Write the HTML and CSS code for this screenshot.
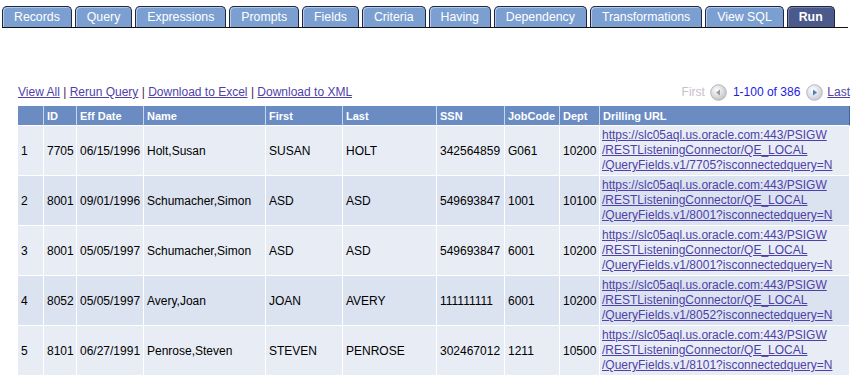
FILE: index.html
```html
<!DOCTYPE html>
<html lang="en">
<head>
  <meta charset="UTF-8" />
  <title>Query Manager - Run</title>
  <link rel="stylesheet" href="styles.css">
</head>
<body>

  <ul class="tabs">
    <li class="tab">Records</li>
    <li class="tab">Query</li>
    <li class="tab">Expressions</li>
    <li class="tab">Prompts</li>
    <li class="tab">Fields</li>
    <li class="tab">Criteria</li>
    <li class="tab">Having</li>
    <li class="tab">Dependency</li>
    <li class="tab">Transformations</li>
    <li class="tab">View SQL</li>
    <li class="tab active">Run</li>
  </ul>

  <div class="toolbar">
    <div class="actions">
      <a href="#">View All</a> <span class="sep">|</span>
      <a href="#">Rerun Query</a> <span class="sep">|</span>
      <a href="#">Download to Excel</a> <span class="sep">|</span>
      <a href="#">Download to XML</a>
    </div>
    <div class="pager">
      <span class="disabled">First</span>
      <svg class="nav-btn" width="17" height="17" viewBox="0 0 17 17">
        <defs>
          <radialGradient id="gPrev" cx="40%" cy="35%" r="65%">
            <stop offset="0" stop-color="#ffffff" />
            <stop offset="1" stop-color="#c4c4c8" />
          </radialGradient>
        </defs>
        <circle cx="8.5" cy="8.5" r="7.8" fill="url(#gPrev)" stroke="#b4b4ba" />
        <path d="M6 8.5 L10 5.5 L10 11.5 Z" fill="#9a9aa0" />
      </svg>
      <span class="count">1-100 of 386</span>
      <svg class="nav-btn" width="17" height="17" viewBox="0 0 17 17">
        <defs>
          <radialGradient id="gNext" cx="40%" cy="35%" r="65%">
            <stop offset="0" stop-color="#ffffff" />
            <stop offset="1" stop-color="#c8ccd6" />
          </radialGradient>
        </defs>
        <circle cx="8.5" cy="8.5" r="7.8" fill="url(#gNext)" stroke="#b4b8c4" />
        <path d="M11 8.5 L7 5.5 L7 11.5 Z" fill="#4d7fc0" />
      </svg>
      <a href="#">Last</a>
    </div>
  </div>

  <table class="grid">
    <colgroup>
      <col style="width:26px"><col style="width:33px"><col style="width:67px"><col style="width:122px">
      <col style="width:77px"><col style="width:94px"><col style="width:68px"><col style="width:55px">
      <col style="width:40px"><col>
    </colgroup>
    <thead>
      <tr>
        <th></th><th>ID</th><th>Eff Date</th><th>Name</th><th>First</th>
        <th>Last</th><th>SSN</th><th>JobCode</th><th>Dept</th><th>Drilling URL</th>
      </tr>
    </thead>
    <tbody>
      <tr>
        <td>1</td><td>7705</td><td>06/15/1996</td><td>Holt,Susan</td><td>SUSAN</td>
        <td>HOLT</td><td>342564859</td><td>G061</td><td>10200</td>
        <td class="url"><a href="#">https://slc05aql.us.oracle.com:443/PSIGW<br>/RESTListeningConnector/QE_LOCAL<br>/QueryFields.v1/7705?isconnectedquery=N</a></td>
      </tr>
      <tr>
        <td>2</td><td>8001</td><td>09/01/1996</td><td>Schumacher,Simon</td><td>ASD</td>
        <td>ASD</td><td>549693847</td><td>1001</td><td>10100</td>
        <td class="url"><a href="#">https://slc05aql.us.oracle.com:443/PSIGW<br>/RESTListeningConnector/QE_LOCAL<br>/QueryFields.v1/8001?isconnectedquery=N</a></td>
      </tr>
      <tr>
        <td>3</td><td>8001</td><td>05/05/1997</td><td>Schumacher,Simon</td><td>ASD</td>
        <td>ASD</td><td>549693847</td><td>6001</td><td>10200</td>
        <td class="url"><a href="#">https://slc05aql.us.oracle.com:443/PSIGW<br>/RESTListeningConnector/QE_LOCAL<br>/QueryFields.v1/8001?isconnectedquery=N</a></td>
      </tr>
      <tr>
        <td>4</td><td>8052</td><td>05/05/1997</td><td>Avery,Joan</td><td>JOAN</td>
        <td>AVERY</td><td>111111111</td><td>6001</td><td>10200</td>
        <td class="url"><a href="#">https://slc05aql.us.oracle.com:443/PSIGW<br>/RESTListeningConnector/QE_LOCAL<br>/QueryFields.v1/8052?isconnectedquery=N</a></td>
      </tr>
      <tr>
        <td>5</td><td>8101</td><td>06/27/1991</td><td>Penrose,Steven</td><td>STEVEN</td>
        <td>PENROSE</td><td>302467012</td><td>1211</td><td>10500</td>
        <td class="url"><a href="#">https://slc05aql.us.oracle.com:443/PSIGW<br>/RESTListeningConnector/QE_LOCAL<br>/QueryFields.v1/8101?isconnectedquery=N</a></td>
      </tr>
    </tbody>
  </table>

</body>
</html>
```

FILE: styles.css
```css
body {
  margin: 0;
  font-family: Arial, "Liberation Sans", sans-serif;
  font-size: 12px;
  color: #000;
  background: #fff;
}

a {
  color: #4f3fa8;
}

/* tab strip */
.tabs {
  list-style: none;
  margin: 6px 0 0 2px;
  padding: 0;
  width: 846px;
  display: flex;
  gap: 3px;
  border-bottom: 1px solid #111;
}

.tab {
  height: 20px;
  line-height: 21px;
  padding: 0 11px;
  font-size: 12.3px;
  background: #7b9fd0;
  color: #fff;
  border: 1px solid #1e2840;
  border-bottom: none;
  border-radius: 5px 5px 0 0;
  box-shadow: inset 1px 1px 0 #b5c9e8;
}

.tab.active {
  background: #4b5a8b;
  font-weight: bold;
  box-shadow: inset 1px 1px 0 #7683ad;
}

/* links + pager */
.toolbar {
  margin: 56px 7px 6px 18px;
  height: 16px;
  line-height: 16px;
  display: flex;
  justify-content: space-between;
  align-items: center;
}

.sep {
  color: #4a2448;
}

.pager {
  display: flex;
  align-items: center;
  gap: 4px;
}

.pager .disabled {
  color: #c8c0cc;
  margin-right: 1px;
}

.pager .count {
  color: #1c1ce0;
  margin: 0 2px;
}

.nav-btn {
  display: block;
}

/* results grid */
.grid {
  margin-left: 18px;
  width: 832px;
  border-collapse: separate;
  border-spacing: 0;
  table-layout: fixed;
}

.grid th {
  height: 19px;
  padding: 0 3px;
  background: #6a8cc3;
  color: #fff;
  font-size: 11px;
  font-weight: bold;
  text-align: left;
  border-right: 1px solid #c9d6ea;
  border-bottom: 1px solid #fff;
}

.grid th:last-child {
  border-right: 1px solid #44639a;
}

.grid td {
  box-sizing: border-box;
  height: 50px;
  padding: 0 3px;
  border-right: 1px solid #fff;
  border-bottom: 1px solid #fff;
  background: #e8edf5;
  white-space: nowrap;
  overflow: hidden;
}

.grid tbody tr:nth-child(even) td {
  background: #dbe2f0;
}

.grid td.url {
  padding: 2px 2px;
  line-height: 15px;
}
```
